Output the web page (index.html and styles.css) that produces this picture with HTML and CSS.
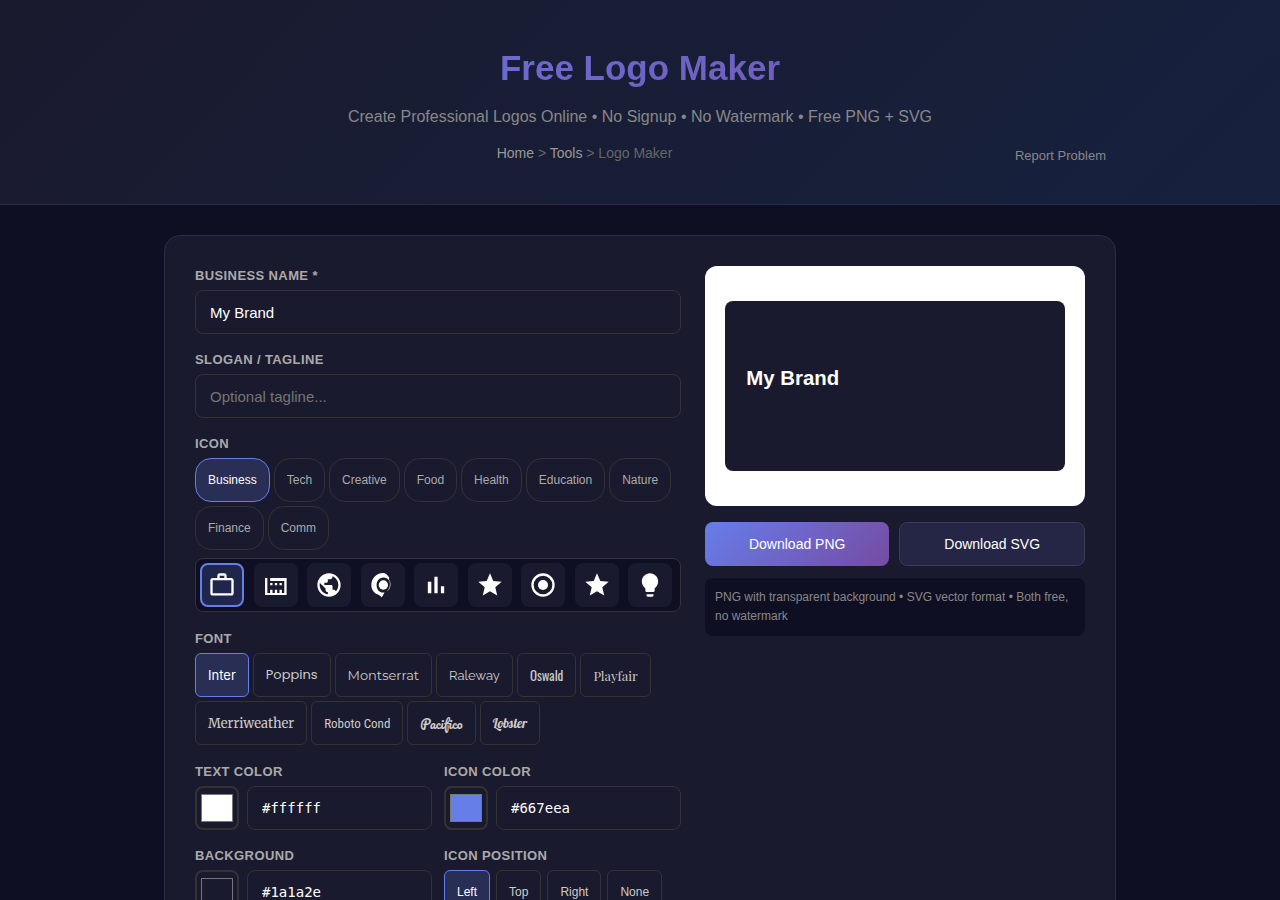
FILE: index.html
```html
<!DOCTYPE html>
<html lang="en">
<head>
    <meta charset="UTF-8">
    <meta name="viewport" content="width=device-width, initial-scale=1.0">
    <title>Free Logo Maker</title>
    <link rel="stylesheet" href="styles.css">
</head>
<body>
    <header class="header">
        <h1>Free Logo Maker</h1>
        <p class="subtitle">Create Professional Logos Online • No Signup • No Watermark • Free PNG + SVG</p>
        <div class="header-nav">
            <nav class="breadcrumb"><a href="#">Home</a> &gt; <a href="#">Tools</a> &gt; Logo Maker</nav>
            <button type="button" class="report-btn">Report Problem</button>
        </div>
    </header>

    <main class="container">
        <div class="card">
            <div class="editor">
                <div class="field">
                    <label for="bizName">Business Name *</label>
                    <input type="text" class="text-input" id="bizName" value="My Brand">
                </div>
                <div class="field">
                    <label for="slogan">Slogan / Tagline</label>
                    <input type="text" class="text-input" id="slogan" placeholder="Optional tagline...">
                </div>
                <div class="field picker" role="group" aria-labelledby="iconLabel">
                    <span class="label" id="iconLabel">Icon</span>
                    <div class="btn-row cats">
                        <button type="button" class="cat-btn active">Business</button>
                        <button type="button" class="cat-btn">Tech</button>
                        <button type="button" class="cat-btn">Creative</button>
                        <button type="button" class="cat-btn">Food</button>
                        <button type="button" class="cat-btn">Health</button>
                        <button type="button" class="cat-btn">Education</button>
                        <button type="button" class="cat-btn">Nature</button>
                        <button type="button" class="cat-btn">Finance</button>
                        <button type="button" class="cat-btn">Comm</button>
                    </div>
                    <div class="icon-grid">
                        <button type="button" class="icon-btn active" aria-label="Briefcase"><svg viewBox="0 0 24 24"><path d="M14 6V4h-4v2h4zM4 8v11h16V8H4zm16-2c1.11 0 2 .89 2 2v11c0 1.11-.89 2-2 2H4c-1.11 0-2-.89-2-2V8c0-1.11.89-2 2-2h4V4c0-1.11.89-2 2-2h4c1.11 0 2 .89 2 2v2h4z"/></svg></button>
                        <button type="button" class="icon-btn" aria-label="Building"><svg viewBox="0 0 24 24"><path d="M2.600 6h2v12.800h14.500V8.500H7V6h14.100v14.600H2.600zM7 10.200h2v2H7zm4 0h2v2h-2zm4 0h2v2h-2zM7 16h2v3H7zm4 0h2v3h-2zm4 0h2v3h-2z"/></svg></button>
                        <button type="button" class="icon-btn" aria-label="Globe"><svg viewBox="0 0 24 24"><path d="M12 2C6.48 2 2 6.48 2 12s4.48 10 10 10 10-4.48 10-10S17.52 2 12 2zm-1 17.93c-3.95-.49-7-3.85-7-7.93 0-.62.08-1.21.21-1.79L9 15v1c0 1.1.9 2 2 2v1.93zm6.9-2.54c-.26-.81-1-1.39-1.9-1.39h-1v-3c0-.55-.45-1-1-1H8v-2h2c.55 0 1-.45 1-1V7h2c1.1 0 2-.9 2-2v-.41c2.93 1.19 5 4.06 5 7.41 0 2.08-.8 3.97-2.1 5.39z"/></svg></button>
                        <button type="button" class="icon-btn" aria-label="Handshake"><svg viewBox="0 0 24 24"><path d="M12 1.800C6 2 2 6.500 2 12.300c0 4.200 3 7.500 6.500 8.200l2.500 1.900 2.300-4c-4 .8-6.800-2.400-6.800-6.200 0-4 2.700-6.600 6-6.600 2 0 3.500.9 4.500 2.400l.3-2.500-2.300-2.700c-1-.7-2-1-3-1z"/><circle cx="12.300" cy="12" r="4"/><path d="M16.200 6c2.700 3.600 2.500 9-1.700 12.200C19.500 15.500 19.400 9 16.200 6z"/></svg></button>
                        <button type="button" class="icon-btn" aria-label="Chart"><svg viewBox="0 0 24 24"><path d="M5 9.2h3V19H5V9.2zM10.6 5h2.8v14h-2.8V5zm5.600 8H19v6h-2.800v-6z"/></svg></button>
                        <button type="button" class="icon-btn" aria-label="Star"><svg viewBox="0 0 24 24"><path d="M12 17.27L18.18 21l-1.64-7.03L22 9.24l-7.19-.61L12 2 9.19 8.63 2 9.24l5.46 4.73L5.82 21z"/></svg></button>
                        <button type="button" class="icon-btn" aria-label="Target"><svg viewBox="0 0 24 24"><path fill-rule="evenodd" d="M12 2a10 10 0 1 0 0 20 10 10 0 0 0 0-20zm0 18a8 8 0 1 1 0-16 8 8 0 0 1 0 16z"/><circle cx="12" cy="12" r="4.300"/></svg></button>
                        <button type="button" class="icon-btn" aria-label="Award"><svg viewBox="0 0 24 24"><path d="M12 17.27L18.18 21l-1.64-7.03L22 9.24l-7.19-.61L12 2 9.19 8.63 2 9.24l5.46 4.73L5.82 21z"/></svg></button>
                        <button type="button" class="icon-btn" aria-label="Idea"><svg viewBox="0 0 24 24"><path d="M9 21c0 .55.45 1 1 1h4c.55 0 1-.45 1-1v-1H9v1zm3-19C8.14 2 5 5.14 5 9c0 2.38 1.19 4.47 3 5.74V17c0 .55.45 1 1 1h6c.55 0 1-.45 1-1v-2.26c1.81-1.27 3-3.36 3-5.74 0-3.86-3.14-7-7-7z"/></svg></button>
                    </div>
                </div>
                <div class="field picker" role="group" aria-labelledby="fontLabel">
                    <span class="label" id="fontLabel">Font</span>
                    <div class="btn-row">
                        <button type="button" class="opt-btn font-inter active">Inter</button>
                        <button type="button" class="opt-btn font-poppins">Poppins</button>
                        <button type="button" class="opt-btn font-montserrat">Montserrat</button>
                        <button type="button" class="opt-btn font-raleway">Raleway</button>
                        <button type="button" class="opt-btn font-oswald">Oswald</button>
                        <button type="button" class="opt-btn font-playfair">Playfair</button>
                        <button type="button" class="opt-btn font-merriweather">Merriweather</button>
                        <button type="button" class="opt-btn font-roboto">Roboto Cond</button>
                        <button type="button" class="opt-btn font-pacifico">Pacifico</button>
                        <button type="button" class="opt-btn font-lobster">Lobster</button>
                    </div>
                </div>
                <div class="field-grid">
                    <div class="field">
                        <label for="textHex">Text Color</label>
                        <div class="color-row">
                            <input type="color" class="swatch" value="#ffffff" aria-label="Pick text color">
                            <input type="text" class="text-input hex" id="textHex" value="#ffffff">
                        </div>
                    </div>
                    <div class="field">
                        <label for="iconHex">Icon Color</label>
                        <div class="color-row">
                            <input type="color" class="swatch" value="#667eea" aria-label="Pick icon color">
                            <input type="text" class="text-input hex" id="iconHex" value="#667eea">
                        </div>
                    </div>
                    <div class="field">
                        <label for="bgHex">Background</label>
                        <div class="color-row">
                            <input type="color" class="swatch" value="#1a1a2e" aria-label="Pick background color">
                            <input type="text" class="text-input hex" id="bgHex" value="#1a1a2e">
                        </div>
                    </div>
                    <div class="field" role="group" aria-labelledby="posLabel">
                        <span class="label" id="posLabel">Icon Position</span>
                        <div class="btn-row positions">
                            <button type="button" class="opt-btn active">Left</button>
                            <button type="button" class="opt-btn">Top</button>
                            <button type="button" class="opt-btn">Right</button>
                            <button type="button" class="opt-btn">None</button>
                        </div>
                    </div>
                </div>
            </div>

            <div class="preview">
                <div class="preview-box">
                    <svg class="logo" viewBox="0 0 400 200" role="img" aria-label="Logo preview">
                        <rect width="400" height="200" fill="#1a1a2e"/>
                        <text x="25" y="99" class="logo-text">My Brand</text>
                    </svg>
                </div>
                <div class="downloads">
                    <button type="button" class="dl-btn primary">Download PNG</button>
                    <button type="button" class="dl-btn">Download SVG</button>
                </div>
                <p class="note">PNG with transparent background • SVG vector format • Both free, no watermark</p>
            </div>
        </div>
    </main>
</body>
</html>
```

FILE: styles.css
```css
* {
    margin: 0;
    padding: 0;
    box-sizing: border-box;
}

html {
    scrollbar-width: none;
}

body {
    font-family: "Liberation Sans", Arial, sans-serif;
    background: #0f0f23;
    color: #fff;
    line-height: 1.6;
}

button, input {
    font-family: inherit;
}

button {
    cursor: pointer;
}

.header {
    background: linear-gradient(135deg, #1a1a2e 0%, #16213e 100%);
    border-bottom: 1px solid #2a2a4a;
    padding: 40px 24px 28px;
    text-align: center;
}

.header h1 {
    font-size: 35px;
    line-height: 56px;
    margin-bottom: 8px;
    background: linear-gradient(135deg, #667eea 0%, #764ba2 100%);
    -webkit-background-clip: text;
    background-clip: text;
    color: transparent;
}

.subtitle {
    color: #888;
    font-size: 16px;
    line-height: 26px;
}

.header-nav {
    display: flex;
    max-width: 952px;
    margin: 4px auto 0;
}

.breadcrumb {
    flex: 1;
    padding-top: 8px;
    font-size: 14px;
    line-height: 22px;
    color: #666;
}

.breadcrumb a {
    color: #999;
    text-decoration: none;
}

.report-btn {
    min-height: 42px;
    padding: 0 10px;
    background: none;
    border: none;
    color: #888;
    font-size: 13px;
}

.container {
    max-width: 1000px;
    margin: 0 auto;
    padding: 30px 24px;
}

.card {
    display: grid;
    grid-template-columns: 1fr 380px;
    align-items: start;
    gap: 24px;
    padding: 30px;
    background: #1a1a2e;
    border: 1px solid #2a2a4a;
    border-radius: 16px;
}

.field {
    margin-bottom: 16px;
}

.picker {
    margin-bottom: 17px;
}

label, .label {
    display: block;
    margin-bottom: 4px;
    color: #aaa;
    font-size: 13px;
    font-weight: bold;
    line-height: 20px;
    letter-spacing: 0.03em;
    text-transform: uppercase;
}

.text-input {
    width: 100%;
    height: 44px;
    padding: 0 14px;
    background: #1a1a2e;
    border: 1px solid #333;
    border-radius: 8px;
    color: #fff;
    font-size: 15px;
}

.btn-row {
    display: flex;
    flex-wrap: wrap;
    gap: 4px;
}

.cats {
    margin-bottom: 8px;
}

.cat-btn, .opt-btn {
    min-height: 44px;
    padding: 0 12px;
    background: #1a1a2e;
    border: 1px solid #333;
    color: #aaa;
    font-size: 12px;
}

.cat-btn {
    border-radius: 16px;
}

.opt-btn {
    border-radius: 6px;
    color: #ccc;
    font-size: 13px;
}

.cat-btn.active, .opt-btn.active {
    background: #292e54;
    border-color: #667eea;
    color: #fff;
}

.icon-grid {
    display: grid;
    grid-template-columns: repeat(9, 44px);
    justify-content: space-between;
    padding: 4px 8px 4px 4px;
    background: #0f0f23;
    border: 1px solid #333;
    border-radius: 8px;
}

.icon-btn {
    display: flex;
    align-items: center;
    justify-content: center;
    height: 44px;
    background: #1a1a2e;
    border: 2px solid transparent;
    border-radius: 8px;
}

.icon-btn.active {
    background: #20254b;
    border-color: #667eea;
}

.icon-btn svg {
    width: 28px;
    height: 28px;
    fill: #fff;
}

.opt-btn.font-inter { font-family: Inter, sans-serif; }
.opt-btn.font-poppins { font-family: Poppins, sans-serif; }
.opt-btn.font-montserrat { font-family: Montserrat, sans-serif; }
.opt-btn.font-raleway { font-family: Raleway, sans-serif; }
.opt-btn.font-oswald { font-family: Oswald, sans-serif; }
.opt-btn.font-playfair { font-family: "Playfair Display", serif; }
.opt-btn.font-merriweather { font-family: Merriweather, serif; }
.opt-btn.font-roboto { font-family: "Roboto Condensed", sans-serif; }
.opt-btn.font-pacifico { font-family: Pacifico, cursive; }
.opt-btn.font-lobster { font-family: Lobster, cursive; }

.field-grid {
    display: grid;
    grid-template-columns: 1fr 1fr;
    column-gap: 12px;
}

.color-row {
    display: flex;
    gap: 8px;
}

.swatch {
    flex: none;
    width: 44px;
    height: 44px;
    padding: 2px;
    background: #1a1a2e;
    border: 2px solid #333;
    border-radius: 8px;
}

.hex {
    flex: 1;
    min-width: 0;
    font-family: "DejaVu Sans Mono", monospace;
    font-size: 14px;
}

.positions {
    gap: 6px;
}

.positions .opt-btn {
    font-size: 12px;
}

.preview-box {
    display: flex;
    align-items: center;
    justify-content: center;
    min-height: 240px;
    padding: 20px;
    background: #fff;
    border-radius: 12px;
}

.logo {
    display: block;
    width: 100%;
    border-radius: 8px;
}

.logo-text {
    font-size: 24px;
    font-weight: bold;
    fill: #fff;
}

.downloads {
    display: flex;
    gap: 10px;
    margin: 16px 0 12px;
}

.dl-btn {
    flex: 1 1 auto;
    min-height: 44px;
    background: #252545;
    border: 1px solid #3a3a5a;
    border-radius: 8px;
    color: #fff;
    font-size: 14px;
}

.dl-btn.primary {
    background: linear-gradient(135deg, #667eea 0%, #764ba2 100%);
    border: none;
}

.note {
    padding: 10px;
    background: #0f0f23;
    border-radius: 8px;
    color: #888;
    font-size: 12px;
}

@media (max-width: 850px) {
    .card {
        grid-template-columns: 1fr;
    }
}
```
